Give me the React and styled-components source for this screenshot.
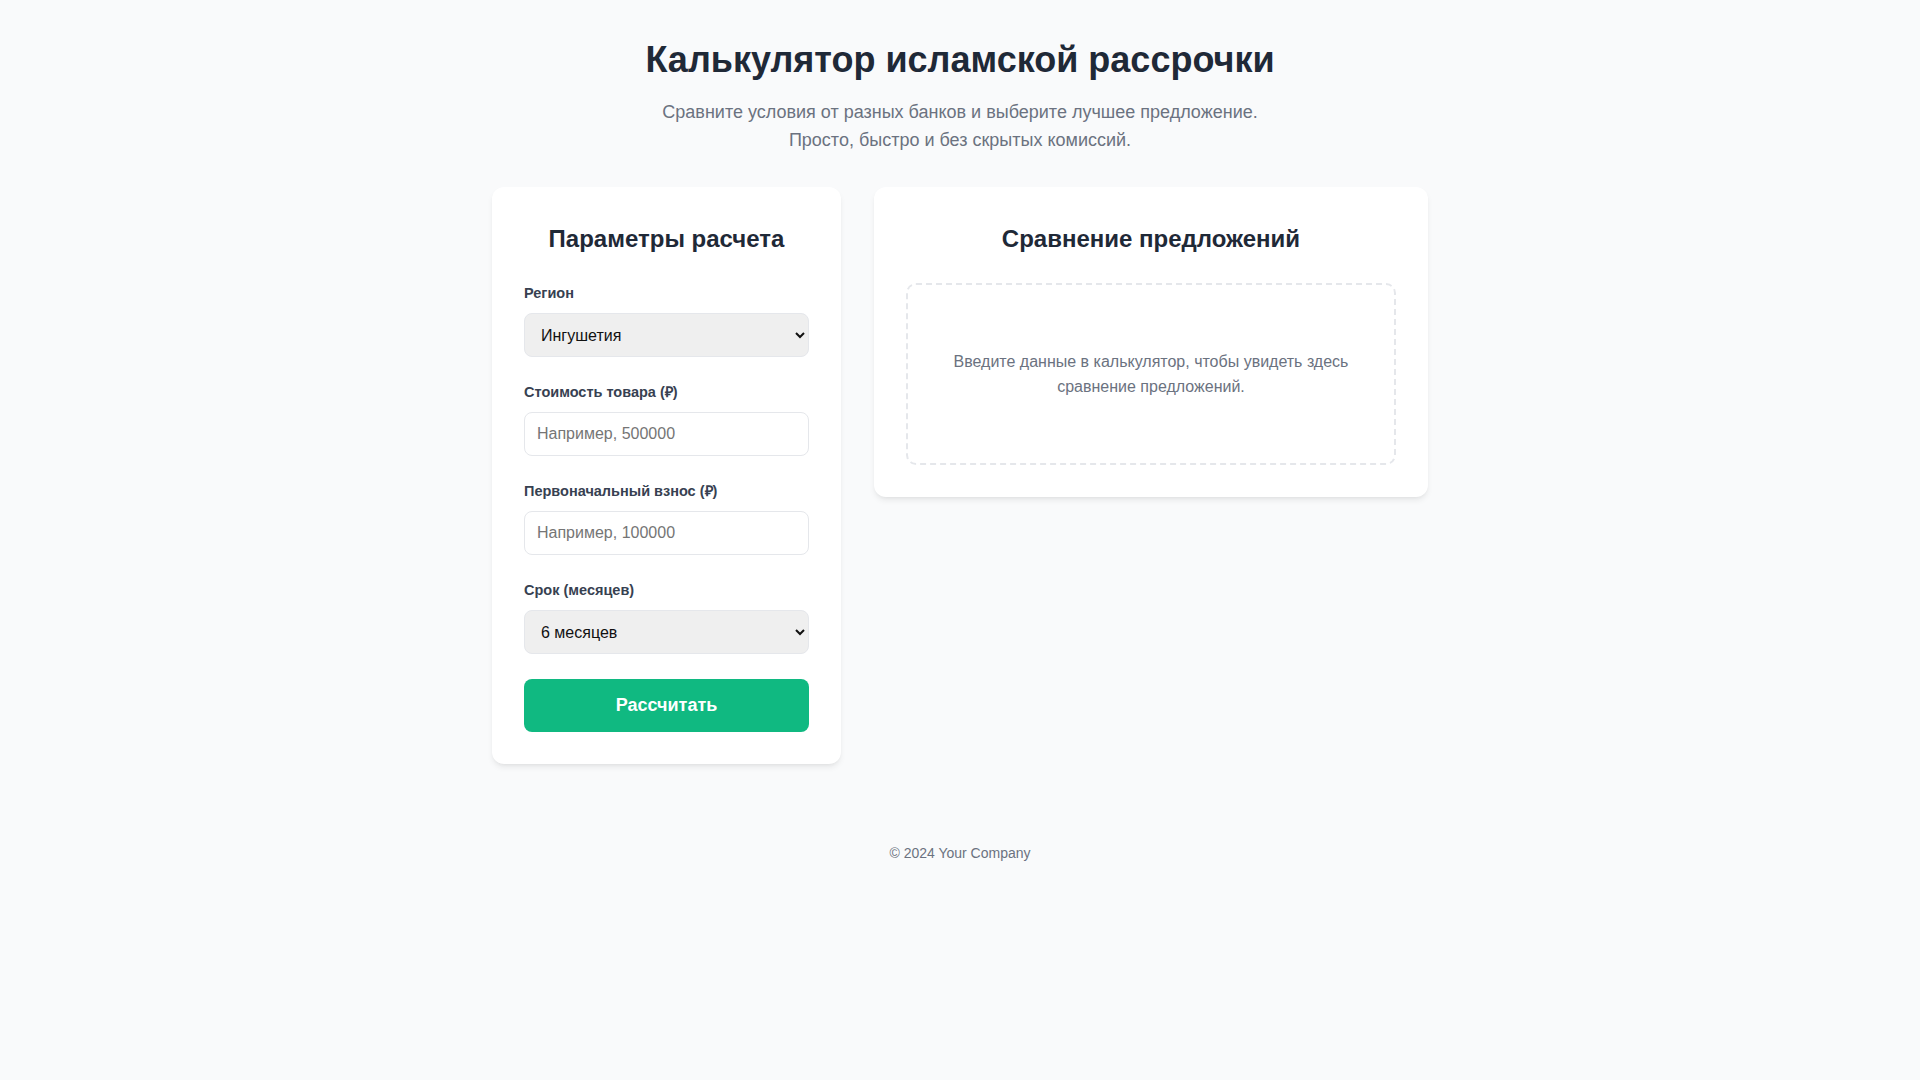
import React from 'react';
import styled, { createGlobalStyle } from 'styled-components';

const GlobalStyle = createGlobalStyle`
  * { box-sizing: border-box; }
  html, body {
    margin: 0;
    padding: 0;
    background: #f9fafb;
    font-family: "Liberation Sans", Arial, sans-serif;
    color: #1f2937;
  }
`;

const Page = styled.div`
  min-height: 100vh;
  padding: 40px 16px 0;
`;

const Header = styled.header`
  text-align: center;
  margin-bottom: 33px;
`;

const Title = styled.h1`
  margin: 0 0 18px;
  font-size: 36px;
  line-height: 40px;
  font-weight: 700;
  color: #1f2937;
`;

const Lead = styled.p`
  margin: 0;
  font-size: 18px;
  line-height: 28px;
  color: #6b7280;
`;

const Columns = styled.main`
  display: flex;
  justify-content: center;
  align-items: flex-start;
  gap: 33px;
`;

const Card = styled.section`
  width: ${(p) => p.$width}px;
  background: #fff;
  border-radius: 12px;
  padding: 32px;
  box-shadow: 0 4px 6px -1px rgba(0, 0, 0, 0.08), 0 2px 4px -2px rgba(0, 0, 0, 0.06);
`;

const CardTitle = styled.h2`
  margin: 4px 0 28px;
  text-align: center;
  font-size: 24px;
  line-height: 32px;
  font-weight: 700;
  color: #1f2937;
`;

const Field = styled.div`
  margin-bottom: 25px;
`;

const Label = styled.label`
  display: block;
  margin-bottom: 10px;
  font-size: 14.5px;
  line-height: 20px;
  font-weight: 700;
  color: #374151;
`;

const Select = styled.select`
  display: block;
  width: 100%;
  height: 44px;
  padding: 0 8px 0 12px;
  border: 1px solid #e5e7eb;
  border-radius: 8px;
  background-color: #efefef;
  font-family: "Liberation Sans", Arial, sans-serif;
  font-size: 16px;
  color: #111;
  outline: none;
`;

const Input = styled.input`
  display: block;
  width: 100%;
  height: 44px;
  padding: 0 12px;
  border: 1px solid #e5e7eb;
  border-radius: 8px;
  background: #fff;
  font-family: "Liberation Sans", Arial, sans-serif;
  font-size: 16px;
  color: #111;
  outline: none;

  &::placeholder {
    color: #757575;
  }
`;

const Button = styled.button`
  display: block;
  width: 100%;
  height: 53px;
  border: none;
  border-radius: 8px;
  background: #10b981;
  color: #fff;
  font-family: "Liberation Sans", Arial, sans-serif;
  font-size: 18px;
  font-weight: 700;
  cursor: pointer;
`;

const Empty = styled.div`
  border: 2px dashed #e5e7eb;
  border-radius: 10px;
  padding: 64px 32px;
  text-align: center;
  font-size: 16px;
  line-height: 25px;
  color: #6b7280;
`;

const Footer = styled.footer`
  padding: 79px 0 40px;
  text-align: center;
  font-size: 14px;
  line-height: 20px;
  color: #6b7280;
`;

const regions = ['Ингушетия', 'Чечня', 'Дагестан', 'Москва', 'Татарстан'];
const terms = [3, 6, 12, 18, 24];

export default function App() {
  return (
    <>
      <GlobalStyle />
      <Page>
        <Header>
          <Title>Калькулятор исламской рассрочки</Title>
          <Lead>
            Сравните условия от разных банков и выберите лучшее предложение.
            <br />
            Просто, быстро и без скрытых комиссий.
          </Lead>
        </Header>

        <Columns>
          <Card $width={349}>
            <CardTitle>Параметры расчета</CardTitle>
            <Field>
              <Label htmlFor="region">Регион</Label>
              <Select id="region" defaultValue="Ингушетия">
                {regions.map((r) => (
                  <option key={r}>{r}</option>
                ))}
              </Select>
            </Field>
            <Field>
              <Label htmlFor="price">Стоимость товара (₽)</Label>
              <Input id="price" type="number" placeholder="Например, 500000" />
            </Field>
            <Field>
              <Label htmlFor="down">Первоначальный взнос (₽)</Label>
              <Input id="down" type="number" placeholder="Например, 100000" />
            </Field>
            <Field>
              <Label htmlFor="term">Срок (месяцев)</Label>
              <Select id="term" defaultValue="6">
                {terms.map((t) => (
                  <option key={t} value={t}>
                    {t} месяцев
                  </option>
                ))}
              </Select>
            </Field>
            <Button type="button">Рассчитать</Button>
          </Card>

          <Card $width={554}>
            <CardTitle>Сравнение предложений</CardTitle>
            <Empty>
              Введите данные в калькулятор, чтобы увидеть здесь сравнение предложений.
            </Empty>
          </Card>
        </Columns>

        <Footer>© 2024 Your Company</Footer>
      </Page>
    </>
  );
}
